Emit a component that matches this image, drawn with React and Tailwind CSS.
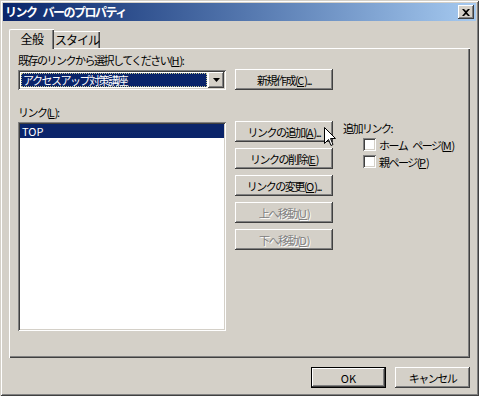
import React from 'react';

// Win2000 style bevels
const raised = 'bg-[#d4d0c8] shadow-[inset_-1px_-1px_0_#404040,inset_1px_1px_0_#ffffff,inset_-2px_-2px_0_#808080,inset_2px_2px_0_#d4d0c8]';
const sunken = 'shadow-[inset_1px_1px_0_#808080,inset_-1px_-1px_0_#ffffff,inset_2px_2px_0_#404040,inset_-2px_-2px_0_#d4d0c8]';

const Mn = ({ children }) => <span className="underline underline-offset-1 tracking-normal">{children}</span>;
const Gap = ({ w = 'w-[5px]' }) => <span className={`inline-block ${w}`} />;

const Button = ({ children, disabled, isDefault, className = '' }) => (
    <div className={`shrink-0 ${isDefault ? 'border border-black' : ''} ${className}`}>
        <div
            className={`${raised} h-full flex items-center justify-center leading-[14px] whitespace-nowrap ${
                disabled ? 'text-[#808080] [text-shadow:1px_1px_0_#ffffff]' : 'text-black'
            }`}
        >
            {children}
        </div>
    </div>
);

const Checkbox = ({ children, className = '' }) => (
    <div className={`flex items-center h-[13px] ${className}`}>
        <div className={`w-[13px] h-[13px] shrink-0 bg-white ${sunken}`} />
        <span className="ml-[3px] leading-[14px] whitespace-nowrap">{children}</span>
    </div>
);

const Cursor = () => (
    <svg width="12" height="20" viewBox="0 0 12 20" className="absolute left-[324px] top-[127px]">
        <path d="M0.5 0.5 L0.5 16.5 L4.5 12.5 L7 18.5 L9 17.5 L6.5 11.5 L11.5 11.5 Z" fill="#fff" stroke="#000" strokeWidth="1" />
    </svg>
);

export default function App() {
    return (
        <div className="relative w-[479px] h-[396px] bg-[#d4d0c8] p-[3px] text-[11px] tracking-[-1.5px] text-black font-['Noto_Sans_CJK_JP','Noto_Sans',sans-serif] shadow-[inset_1px_1px_0_#d4d0c8,inset_-1px_-1px_0_#404040,inset_2px_2px_0_#ffffff,inset_-2px_-2px_0_#808080]">
            {/* Title bar */}
            <div className="h-[18px] flex items-center justify-between bg-gradient-to-r from-[#0a246a] to-[#a6caf0]">
                <span className="pl-[2px] text-white text-[12px] font-bold tracking-[-1.5px] leading-[18px] whitespace-nowrap">
                    リンク<Gap w="w-[6px]" />バーのプロパティ
                </span>
                <div className={`${raised} w-[16px] h-[14px] mr-[2px] flex items-center justify-center`}>
                    <svg width="8" height="7" viewBox="0 0 8 7">
                        <path d="M0 0h2l2 2 2-2h2L5 3.5 8 7H6L4 5 2 7H0l3-3.5z" fill="#000" />
                    </svg>
                </div>
            </div>

            {/* Tabs */}
            <div className="flex items-end h-[20px] mt-[7px] ml-[6px]">
                <div className="relative z-10 h-[20px] w-[45px] bg-[#d4d0c8] border-t border-l border-white rounded-tl-[2px] shadow-[inset_-1px_0_0_#404040,inset_-2px_0_0_#808080] flex items-center justify-center -mb-px pb-px text-[12px] tracking-[-0.5px]">
                    全般
                </div>
                <div className="h-[17px] w-[46px] border-t border-white shadow-[inset_-1px_0_0_#404040,inset_-2px_0_0_#808080] flex items-center justify-center whitespace-nowrap text-[12px] tracking-[-1px]">
                    スタイル
                </div>
            </div>

            {/* Panel */}
            <div className="mx-[6px] h-[310px] border-t border-l border-white shadow-[inset_-1px_-1px_0_#404040,inset_-2px_-2px_0_#808080] pt-[4px] pl-[8px]">
                <div className="flex items-end">
                    <div className="w-[208px] shrink-0">
                        <div className="h-[14px] leading-[14px] whitespace-nowrap">
                            既存のリンクから選択してください(<Mn>H</Mn>):
                        </div>
                        <div className={`mt-[3px] h-[20px] bg-white ${sunken} p-[2px] flex`}>
                            <div className="flex-1 m-[1px] bg-[#0a246a] border border-dotted border-[#c8c890] text-white leading-[12px] pl-[1px] whitespace-nowrap">
                                アクセスアップ対策講座
                            </div>
                            <div className={`${raised} w-[16px] flex items-center justify-center`}>
                                <svg width="7" height="4" viewBox="0 0 7 4">
                                    <path d="M0 0h7L3.5 4z" fill="#000" />
                                </svg>
                            </div>
                        </div>
                    </div>
                    <Button className="ml-[9px] w-[98px] h-[21px]">
                        新規作成(<Mn>C</Mn>)...
                    </Button>
                </div>

                <div className="flex items-start mt-[15px]">
                    <div className="w-[208px] shrink-0">
                        <div className="h-[14px] leading-[14px]">
                            リンク(<Mn>L</Mn>):
                        </div>
                        <div className={`mt-[3px] h-[209px] bg-white ${sunken} p-[2px]`}>
                            <div className="h-[14px] bg-[#0a246a] text-white leading-[14px] pl-[2px] tracking-normal">TOP</div>
                        </div>
                    </div>

                    <div className="ml-[9px] w-[98px] shrink-0 pt-[16px] flex flex-col gap-[6px]">
                        <Button className="h-[21px]">
                            リンクの追加(<Mn>A</Mn>)...
                        </Button>
                        <Button className="h-[21px]">
                            リンクの削除(<Mn>E</Mn>)
                        </Button>
                        <Button className="h-[21px]">
                            リンクの変更(<Mn>O</Mn>)...
                        </Button>
                        <Button className="h-[21px]" disabled>
                            上へ移動(<Mn>U</Mn>)
                        </Button>
                        <Button className="h-[21px]" disabled>
                            下へ移動(<Mn>D</Mn>)
                        </Button>
                    </div>

                    <div className="ml-[10px] pt-[16px]">
                        <div className="h-[14px] leading-[14px]">追加リンク:</div>
                        <div className="pl-[20px]">
                            <Checkbox className="mt-[3px]">
                                ホーム<Gap />ページ(<Mn>M</Mn>)
                            </Checkbox>
                            <Checkbox className="mt-[4px]">
                                親ページ(<Mn>P</Mn>)
                            </Checkbox>
                        </div>
                    </div>
                </div>
            </div>

            {/* Footer buttons */}
            <div className="flex justify-end gap-[9px] mt-[9px] mr-[6px]">
                <Button isDefault className="w-[75px] h-[21px] tracking-normal">OK</Button>
                <Button className="w-[75px] h-[21px]">キャンセル</Button>
            </div>

            <Cursor />
        </div>
    );
}
